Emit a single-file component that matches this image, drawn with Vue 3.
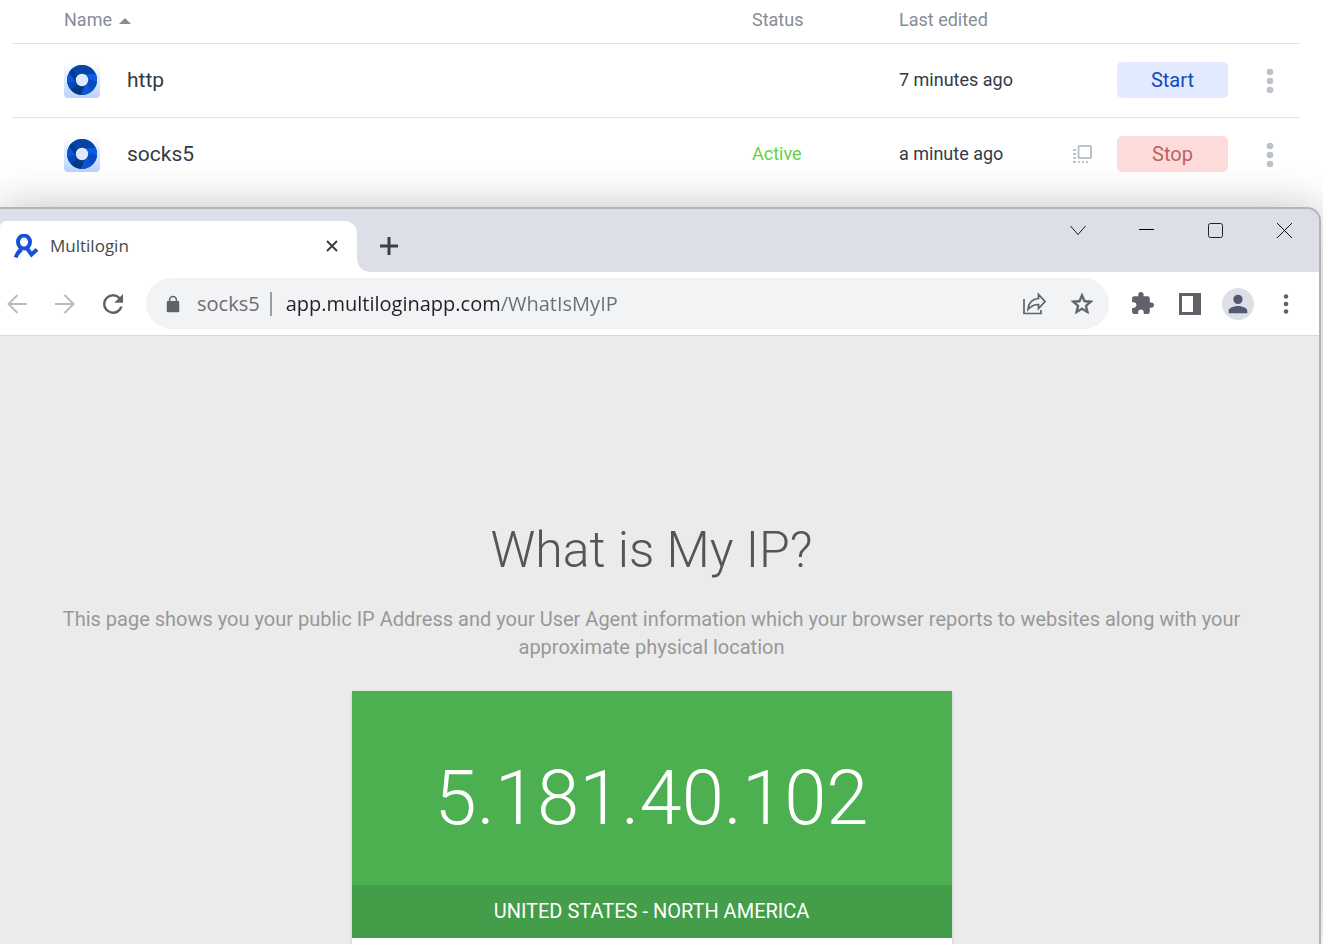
<script setup>
import { ref } from 'vue'

const profiles = [
  { name: 'http', status: '', edited: '7 minutes ago', running: false },
  { name: 'socks5', status: 'Active', edited: 'a minute ago', running: true },
]
const address = ref('app.multiloginapp.com/WhatIsMyIP')
</script>

<template>
  <div class="screen">
    <table class="profiles">
      <colgroup>
        <col />
        <col class="col-status" />
        <col class="col-edited" />
        <col class="col-actions" />
      </colgroup>
      <thead>
        <tr>
          <th class="name-cell" scope="col" aria-sort="ascending">
            Name
            <svg class="sort" width="12" height="6" viewBox="0 0 12 6"><path d="M0 6L6 0l6 6z" fill="#858d97" /></svg>
          </th>
          <th scope="col">Status</th>
          <th scope="col">Last edited</th>
          <th aria-label="Actions"></th>
        </tr>
      </thead>
      <tbody>
        <tr v-for="p in profiles" :key="p.name">
          <td class="name-cell">
            <div class="profile">
              <span class="tile">
                <svg width="30" height="30" viewBox="0 0 30 30">
                  <circle cx="15" cy="15" r="15" fill="#0a4cc4" />
                  <path d="M15 0A15 15 0 0 0 5 3.800L9 13l6-4 14 0A15 15 0 0 0 15 0z" fill="#0744a6" />
                  <path d="M5 3.800A15 15 0 0 0 2 7.500L9 17l2-5z" fill="#03398c" />
                  <path d="M2 7.500A15 15 0 0 0 .5 18L9 17z" fill="#0b55d8" />
                  <path d="M.5 18A15 15 0 0 0 4 25l6-5-1-4z" fill="#0748b4" />
                  <path d="M4 25a15 15 0 0 0 10 5l2-4 2-5-8-1z" fill="#03397f" />
                  <path d="M14 30a15 15 0 0 0 11-4l-5-7-3 3z" fill="#0c55d6" />
                  <path d="M25 26a15 15 0 0 0 5-9l-8-4-2 6z" fill="#084bc0" />
                  <path d="M30 17a15 15 0 0 0-1-8H18l4 5z" fill="#0a5ae2" />
                  <circle cx="15" cy="15" r="6.200" fill="#dfe9ff" />
                </svg>
              </span>
              <span>{{ p.name }}</span>
            </div>
          </td>
          <td class="active">{{ p.status }}</td>
          <td>{{ p.edited }}</td>
          <td>
            <div class="actions">
              <button v-if="p.running" class="icon-btn popup" type="button" aria-label="Bring window to front">
                <svg width="20" height="20" viewBox="0 0 20 20" fill="#bcc3cb">
                  <path fill-rule="evenodd" d="M6 1h11.500A1.500 1.500 0 0 1 19 2.500v11a1.500 1.500 0 0 1-1.500 1.500H6a1.500 1.500 0 0 1-1.500-1.500v-11A1.500 1.500 0 0 1 6 1zM6.500 3v10H17V3z" />
                  <path d="M0 5h3v2H0zM0 9h3v2H0zM0 13h3v2H0zM0 17h3v2H0zM5 17h2v2H5zM9 17h2v2H9zM13 17h2v2h-2z" />
                </svg>
              </button>
              <button class="run" :class="{ stop: p.running }" type="button">{{ p.running ? 'Stop' : 'Start' }}</button>
              <button class="icon-btn more" type="button" :aria-label="'More actions for ' + p.name">
                <svg width="8" height="26" viewBox="0 0 8 26" fill="#bcc3cb">
                  <circle cx="4" cy="4" r="3.300" /><circle cx="4" cy="13" r="3.300" /><circle cx="4" cy="22" r="3.300" />
                </svg>
              </button>
            </div>
          </td>
        </tr>
      </tbody>
    </table>

    <section class="window">
      <header class="tabstrip">
        <div class="tab">
          <svg width="24" height="24" viewBox="0 0 24 24" fill="none" stroke="#1652d6" stroke-width="4">
            <ellipse cx="10" cy="8" rx="6" ry="6.400" />
            <path d="M12 13l5.500 7.500L23 15.500M7.500 15.500C4.500 17.500 2.800 20 1.800 23.500" />
          </svg>
          <span class="tab-title">Multilogin</span>
          <button class="icon-btn tab-close" type="button" aria-label="Close tab">
            <svg width="12" height="12" viewBox="0 0 12 12" fill="none" stroke="#3c4043" stroke-width="2"><path d="M1 1l10 10M11 1L1 11" /></svg>
          </button>
        </div>
        <button class="icon-btn new-tab" type="button" aria-label="New tab">
          <svg width="18" height="18" viewBox="0 0 18 18" fill="none" stroke="#3c4043" stroke-width="3"><path d="M9 0v18M0 9h18" /></svg>
        </button>
        <div class="controls">
          <button class="icon-btn" type="button" aria-label="Search tabs">
            <svg width="16" height="16" viewBox="0 0 16 16" fill="none" stroke="#1b1b1b" stroke-width="1"><path d="M.5 4L8 12.500 15.500 4" /></svg>
          </button>
          <button class="icon-btn" type="button" aria-label="Minimize">
            <svg width="15" height="15" viewBox="0 0 15 15"><path d="M0 6h15v1H0z" fill="#000" /></svg>
          </button>
          <button class="icon-btn" type="button" aria-label="Maximize">
            <svg width="15" height="15" viewBox="0 0 15 15" fill="none" stroke="#222" stroke-width="1"><rect x=".5" y=".5" width="14" height="14" rx="2" /></svg>
          </button>
          <button class="icon-btn" type="button" aria-label="Close">
            <svg width="15" height="15" viewBox="0 0 15 15" fill="none" stroke="#111" stroke-width="1"><path d="M0 0l15 15M15 0L0 15" /></svg>
          </button>
        </div>
      </header>

      <nav class="toolbar">
        <div class="group">
          <button class="icon-btn tool" type="button" aria-label="Back">
            <svg width="20" height="20" viewBox="0 0 20 20" fill="none" stroke="#babcbe" stroke-width="2"><path d="M20 10H1.500M10.500 1l-9 9 9 9" /></svg>
          </button>
          <button class="icon-btn tool" type="button" aria-label="Forward">
            <svg width="20" height="20" viewBox="0 0 20 20" fill="none" stroke="#babcbe" stroke-width="2"><path d="M0 10h18.500M9.500 1l9 9-9 9" /></svg>
          </button>
          <button class="icon-btn tool" type="button" aria-label="Reload">
            <svg width="30" height="30" viewBox="0 0 24 24" fill="#5f6368"><path d="M17.650 6.350A7.960 7.960 0 0 0 12 4a8 8 0 1 0 7.730 10h-2.080A6 6 0 1 1 12 6c1.660 0 3.140.69 4.220 1.780L13 11h7V4z" /></svg>
          </button>
        </div>
        <div class="omnibox">
          <svg class="lock" width="20" height="20" viewBox="0 0 24 24" fill="#5f6368"><path d="M18 8.500h-1V7A5 5 0 0 0 7 7v1.500H6a1.500 1.500 0 0 0-1.500 1.500v10.500A1.500 1.500 0 0 0 6 22h12a1.500 1.500 0 0 0 1.500-1.500V10A1.500 1.500 0 0 0 18 8.500zM15.200 8.500H8.800V7a3.200 3.200 0 0 1 6.400 0z" /></svg>
          <label class="prefix" for="address">socks5</label>
          <span class="divider"></span>
          <input id="address" v-model="address" type="text" spellcheck="false" />
          <div class="group">
            <button class="icon-btn tool" type="button" aria-label="Share">
              <svg width="24" height="24" viewBox="0 0 24 24" fill="none" stroke="#5f6368" stroke-width="1.700"><path d="M2 7v14.500h17V18M6 17.500C6.500 10.500 10.500 7 16.500 6.500V2.500l6.500 7-6.500 7v-4C12 12.500 9 14 6 17.500z" /></svg>
            </button>
            <button class="icon-btn tool" type="button" aria-label="Bookmark this tab">
              <svg width="26" height="26" viewBox="0 0 24 24" fill="#5f6368" stroke="#5f6368" stroke-width=".6"><path d="M22 9.240l-7.190-.62L12 2 9.190 8.630 2 9.240l5.460 4.730L5.820 21 12 17.270 18.180 21l-1.630-7.030L22 9.240zM12 15.400l-3.760 2.270 1-4.280-3.320-2.880 4.380-.38L12 6.100l1.710 4.040 4.380.38-3.320 2.880 1 4.280L12 15.400z" /></svg>
            </button>
          </div>
        </div>
        <div class="group">
          <button class="icon-btn tool" type="button" aria-label="Extensions">
            <svg width="25" height="25" viewBox="0 0 24 24" fill="#5f6368"><path d="M20.500 11H19V7c0-1.100-.9-2-2-2h-4V3.500a2.500 2.500 0 0 0-5 0V5H4c-1.100 0-1.990.9-1.990 2v3.800H3.500c1.490 0 2.700 1.210 2.700 2.700s-1.210 2.700-2.700 2.700H2V20c0 1.100.9 2 2 2h3.800v-1.500c0-1.490 1.210-2.700 2.700-2.700s2.700 1.210 2.700 2.700V22H17c1.100 0 2-.9 2-2v-4h1.500a2.500 2.500 0 0 0 0-5z" /></svg>
          </button>
          <button class="icon-btn tool" type="button" aria-label="Side panel">
            <svg width="22" height="22" viewBox="0 0 22 22" fill="#5f6368"><path fill-rule="evenodd" d="M0 0h22v22H0zM3 3v16h11V3z" /></svg>
          </button>
          <button class="icon-btn tool avatar" type="button" aria-label="Profile">
            <svg width="28" height="28" viewBox="0 0 24 24" fill="#525b72"><path d="M12 12a4 4 0 1 0 0-8 4 4 0 0 0 0 8zm0 1.700c-2.670 0-8 1.340-8 4V20h16v-2.300c0-2.660-5.330-4-8-4z" /></svg>
          </button>
          <button class="icon-btn tool" type="button" aria-label="Browser menu">
            <svg width="6" height="20" viewBox="0 0 6 20" fill="#5f6368"><circle cx="3" cy="2.500" r="2.300" /><circle cx="3" cy="10" r="2.300" /><circle cx="3" cy="17.500" r="2.300" /></svg>
          </button>
        </div>
      </nav>

      <main class="page">
        <h1>What is My IP?</h1>
        <p class="intro">
          This page shows you your public IP Address and your User Agent information which your browser reports to
          websites along with your approximate physical location
        </p>
        <div class="card">
          <div class="ip">5.181.40.102</div>
          <div class="region">UNITED STATES - NORTH AMERICA</div>
        </div>
      </main>
    </section>
  </div>
</template>

<style>
body {
  margin: 0;
  background: #fff;
}
</style>

<style scoped>
.screen {
  display: flex;
  flex-direction: column;
  min-height: 100vh;
  overflow: hidden;
  font-family: Roboto, sans-serif;
  color: #343a46;
}
.screen *,
.screen {
  box-sizing: border-box;
}
svg {
  display: block;
  flex: none;
}
button {
  font: inherit;
  cursor: pointer;
}
.icon-btn {
  display: flex;
  flex: none;
  align-items: center;
  justify-content: center;
  padding: 0;
  border: 0;
  background: none;
}

.profiles {
  margin: 0 23px 15px 12px;
  border-collapse: separate;
  border-spacing: 0;
  table-layout: fixed;
  font-size: 18px;
}
.col-status { width: 147px; }
.col-edited { width: 174px; }
.col-actions { width: 227px; }
th {
  height: 44px;
  padding: 0 0 4px;
  border-bottom: 1px solid #dfe1e3;
  text-align: left;
  font-weight: 400;
  color: #858d97;
}
.sort {
  display: inline-block;
  margin-left: 3px;
  vertical-align: 2px;
}
td {
  height: 74px;
  padding: 0 0 2px;
  border-bottom: 1px solid #dfe1e3;
}
tbody tr:last-child td {
  border-bottom-color: transparent;
}
.name-cell {
  padding-left: 52px;
}
.profile {
  display: flex;
  align-items: center;
  gap: 27px;
  font-size: 21px;
}
.tile {
  display: flex;
  align-items: center;
  justify-content: center;
  width: 36px;
  height: 36px;
  border-radius: 4px;
  background: linear-gradient(#fff, #bad2ff);
}
.active {
  color: #5fd145;
}
.actions {
  display: flex;
  align-items: center;
  justify-content: flex-end;
  padding-right: 18px;
}
.popup {
  margin-right: 24px;
}
.run {
  width: 111px;
  height: 36px;
  margin-right: 30px;
  padding: 0;
  border: 0;
  border-radius: 5px;
  background: #e1eaff;
  color: #1449bd;
  font-size: 20px;
}
.run.stop {
  background: #ffdcdc;
  color: #c06060;
}
.more {
  width: 24px;
  height: 36px;
  padding-top: 2px;
}

.window {
  display: flex;
  flex: 1;
  flex-direction: column;
  margin-right: 2px;
  border: solid #b4b4b4;
  border-width: 2px 2px 0 0;
  border-radius: 0 14px 0 0;
  box-shadow: 0 0 44px rgba(0, 0, 0, 0.24);
  overflow: clip;
  background: #ebebeb;
}
.tabstrip {
  display: flex;
  align-items: flex-end;
  height: 63px;
  background: #dcdfe7;
}
.tab {
  position: relative;
  display: flex;
  align-items: center;
  width: 357px;
  height: 51px;
  padding: 0 13px 2px 14px;
  border-radius: 6px 12px 0 0;
  background: #fff;
}
.tab::after {
  content: "";
  position: absolute;
  left: 100%;
  bottom: 0;
  width: 12px;
  height: 12px;
  background: radial-gradient(circle at 100% 0, transparent 11px, #fff 12px);
}
.tab-title {
  flex: 1;
  padding-left: 12px;
  font-family: "Open Sans", sans-serif;
  font-size: 17px;
  color: #45494d;
}
.tab-close {
  width: 24px;
  height: 24px;
}
.new-tab {
  width: 32px;
  height: 51px;
  margin-left: 16px;
  padding-bottom: 2px;
}
.controls {
  display: flex;
  align-self: flex-start;
  margin-left: auto;
}
.controls .icon-btn {
  width: 69px;
  height: 42px;
}
.toolbar {
  display: flex;
  align-items: center;
  gap: 17px;
  height: 64px;
  padding: 0 17px 0 1px;
  border-bottom: 1px solid #d8d9db;
  background: #fff;
}
.group {
  display: flex;
  gap: 16px;
}
.tool {
  width: 32px;
  height: 32px;
}
.avatar {
  border-radius: 50%;
  background: #dde0e7;
}
.omnibox {
  display: flex;
  flex: 1;
  align-items: center;
  min-width: 0;
  height: 51px;
  padding: 0 11px 0 17px;
  border-radius: 26px;
  background: #f1f3f4;
  font-family: "Open Sans", sans-serif;
  font-size: 20px;
}
.prefix {
  margin-left: 14px;
  color: #6a6e73;
}
.divider {
  width: 2px;
  height: 24px;
  margin: 0 14px 0 10px;
  background: #9a9da1;
}
#address {
  flex: 1;
  min-width: 0;
  padding: 0;
  border: 0;
  outline: 0;
  background: linear-gradient(to right, #202124 214px, #6a6e73 214px);
  background-clip: text;
  color: transparent;
  caret-color: #202124;
  font: inherit;
}
.page {
  display: flex;
  flex: 1;
  flex-direction: column;
  align-items: center;
  padding: 184px 16px 0 0;
}
h1 {
  margin: 0;
  font-size: 50px;
  font-weight: 300;
  line-height: 60px;
  color: #555;
}
.intro {
  max-width: 1200px;
  margin: 25px 0 30px;
  text-align: center;
  font-size: 20px;
  line-height: 28px;
  color: #989898;
}
.card {
  display: flex;
  flex: 1;
  flex-direction: column;
  width: 100%;
  max-width: 600px;
  background: #fff;
  box-shadow: 0 1px 3px rgba(0, 0, 0, 0.16);
  text-align: center;
  color: #fff;
}
.ip {
  padding: 62px 0 42px;
  background: #4caf50;
  font-size: 76px;
  font-weight: 300;
  line-height: 90px;
}
.region {
  padding: 12px 0 13px;
  background: #449d48;
  font-size: 20px;
  line-height: 28px;
}
</style>
